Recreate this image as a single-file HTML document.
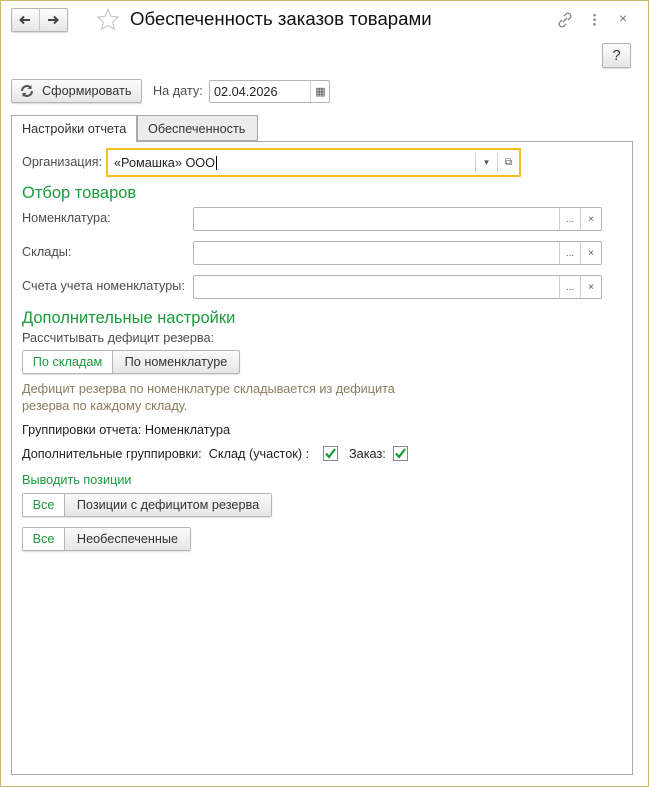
<!DOCTYPE html>
<html><head><meta charset="utf-8"><style>
*{box-sizing:border-box}
body{margin:0;width:649px;height:787px;background:#fff;font-family:"Liberation Sans",Arial,sans-serif;font-size:12.7px;color:#333;position:relative;overflow:hidden}
.a{position:absolute}
.frame{left:0;top:0;width:649px;height:787px;border:1px solid #c9b96a}
.btn{position:absolute;border:1px solid #b5b5b5;border-radius:2px;background:linear-gradient(#fdfdfd,#e6e6e6);box-shadow:0 1px 1px rgba(0,0,0,.15);display:flex;align-items:center;justify-content:center;font-size:12.7px;color:#333}
.inp{position:absolute;border:1px solid #b4b4b4;border-radius:2px;background:#fff}
.lbl{position:absolute;font-size:12.7px;color:#4d4d4d;white-space:nowrap}
.green{position:absolute;color:#1a9a3a;white-space:nowrap}
.sb{position:absolute;top:0;bottom:0;border-left:1px solid #d0d0d0;display:flex;align-items:center;justify-content:center;font-size:10px;color:#555}
.seg{position:absolute;display:flex;border:1px solid #b5b5b5;border-radius:2px;box-shadow:0 1px 1px rgba(0,0,0,.12);height:24px}
.seg div{display:flex;align-items:center;justify-content:center;font-size:12.7px}
.seg .on{background:#fff;color:#1a9a3a;border-right:1px solid #b5b5b5}
.seg .off{background:linear-gradient(#fafafa,#e6e6e6);color:#333}
.cb{position:absolute;width:15px;height:15px}
</style></head><body>
<div class="a frame"></div>
<div class="btn" style="left:11px;top:8px;width:57px;height:24px;padding:0"><div style="width:28px;height:100%;display:flex;align-items:center;justify-content:center;border-right:1px solid #c8c8c8"><svg width="12" height="10" viewBox="0 0 12 10"><path d="M11 5H2M5 1.5L1.5 5 5 8.5" stroke="#444" stroke-width="2" fill="none"/></svg></div><div style="width:28px;display:flex;align-items:center;justify-content:center"><svg width="12" height="10" viewBox="0 0 12 10"><path d="M1 5h9M7 1.5L10.5 5 7 8.5" stroke="#444" stroke-width="2" fill="none"/></svg></div></div>
<svg class="a" style="left:96px;top:8px" width="24" height="23" viewBox="0 0 24 23"><path d="M12 1.5l3 6.8 7.3.7-5.5 4.9 1.6 7.2L12 17.4l-6.4 3.7 1.6-7.2L1.7 9l7.3-.7z" fill="none" stroke="#c8c8c8" stroke-width="1.2"/></svg>
<div class="a" style="left:130px;top:8px;font-size:18.6px;color:#111">Обеспеченность заказов товарами</div>
<svg class="a" style="left:557px;top:12px" width="16" height="16" viewBox="0 0 16 16" fill="none" stroke="#888" stroke-width="1.3"><path d="M7 4l2-2a2.8 2.8 0 014 4l-2 2M9 12l-2 2a2.8 2.8 0 01-4-4l2-2M6 10l4-4"/></svg>
<div class="a" style="left:593px;top:13px;width:3px;height:13px;background:radial-gradient(circle,#888 1.2px,transparent 1.5px) 0 0/3px 4.5px"></div>
<div class="a" style="left:619px;top:10px;font-size:14px;color:#777">×</div>
<div class="btn" style="left:602px;top:43px;width:29px;height:25px;font-size:15px">?</div>
<div class="btn" style="left:11px;top:79px;width:131px;height:24px;justify-content:flex-start;padding-left:8px"><svg width="14" height="14" viewBox="0 0 14 14" style="margin-right:8px"><path d="M2 7a5 5 0 018.5-3.5M12 7a5 5 0 01-8.5 3.5" stroke="#555" stroke-width="2" fill="none"/><path d="M11.5 1v4h-4zM2.5 13V9h4z" fill="#555"/></svg>Сформировать</div>
<div class="lbl" style="left:153px;top:84px">На дату:</div>
<div class="inp" style="left:209px;top:80px;width:121px;height:23px"><span class="a" style="left:4px;top:4px;color:#222">02.04.2026</span><div class="sb" style="left:100px;width:20px;font-size:11px">&#9638;</div></div>
<div class="a" style="left:11px;top:141px;width:622px;height:634px;border:1px solid #aaa"></div>
<div class="a" style="left:11px;top:115px;width:126px;height:27px;border:1px solid #aaa;border-bottom:none;background:#fff;padding:6px 0 0 10px;color:#333">Настройки отчета</div>
<div class="a" style="left:137px;top:115px;width:121px;height:26px;border:1px solid #aaa;background:#ececec;padding:6px 0 0 10px;color:#333">Обеспеченность</div>
<div class="lbl" style="left:22px;top:155px">Организация:</div>
<div class="a" style="left:106px;top:148px;width:415px;height:29px;border:2px solid #f2c120;background:#fff"><span class="a" style="left:6px;top:6px;color:#222">«Ромашка» ООО<span style="border-left:1px solid #000;margin-left:1px"></span></span><div class="sb" style="left:367px;width:22px;top:3px;bottom:3px;font-size:8px">&#9660;</div><div class="sb" style="left:389px;width:22px;top:3px;bottom:3px">&#10697;</div></div>
<div class="green" style="left:22px;top:184px;font-size:16.5px">Отбор товаров</div>
<div class="lbl" style="left:22px;top:211px">Номенклатура:</div>
<div class="inp" style="left:193px;top:207px;width:409px;height:24px"><div class="sb" style="left:365px;width:21px">...</div><div class="sb" style="left:386px;width:21px">×</div></div>
<div class="lbl" style="left:22px;top:245px">Склады:</div>
<div class="inp" style="left:193px;top:241px;width:409px;height:24px"><div class="sb" style="left:365px;width:21px">...</div><div class="sb" style="left:386px;width:21px">×</div></div>
<div class="lbl" style="left:22px;top:279px">Счета учета номенклатуры:</div>
<div class="inp" style="left:193px;top:275px;width:409px;height:24px"><div class="sb" style="left:365px;width:21px">...</div><div class="sb" style="left:386px;width:21px">×</div></div>
<div class="green" style="left:22px;top:309px;font-size:16.5px">Дополнительные настройки</div>
<div class="lbl" style="left:22px;top:331px">Рассчитывать дефицит резерва:</div>
<div class="seg" style="left:22px;top:350px"><div class="on" style="width:90px">По складам</div><div class="off" style="width:126px">По номенклатуре</div></div>
<div class="lbl" style="left:22px;top:381px;color:#8a7c60;line-height:17px">Дефицит резерва по номенклатуре складывается из дефицита<br>резерва по каждому складу.</div>
<div class="lbl" style="left:22px;top:423px;color:#222">Группировки отчета: Номенклатура</div>
<div class="lbl" style="left:22px;top:447px;color:#222">Дополнительные группировки:&nbsp; Склад (участок) :</div>
<svg class="cb" style="left:323px;top:446px" viewBox="0 0 15 15"><rect x=".5" y=".5" width="14" height="14" fill="#fff" stroke="#888"/><path d="M3 7.5l3 3.5 6-8" stroke="#1a9a3a" stroke-width="2.2" fill="none"/></svg>
<div class="lbl" style="left:349px;top:447px;color:#222">Заказ:</div>
<svg class="cb" style="left:393px;top:446px" viewBox="0 0 15 15"><rect x=".5" y=".5" width="14" height="14" fill="#fff" stroke="#888"/><path d="M3 7.5l3 3.5 6-8" stroke="#1a9a3a" stroke-width="2.2" fill="none"/></svg>
<div class="green" style="left:22px;top:473px;font-size:12.7px">Выводить позиции</div>
<div class="seg" style="left:22px;top:493px"><div class="on" style="width:42px">Все</div><div class="off" style="width:206px">Позиции с дефицитом резерва</div></div>
<div class="seg" style="left:22px;top:527px"><div class="on" style="width:42px">Все</div><div class="off" style="width:125px">Необеспеченные</div></div>
</body></html>
